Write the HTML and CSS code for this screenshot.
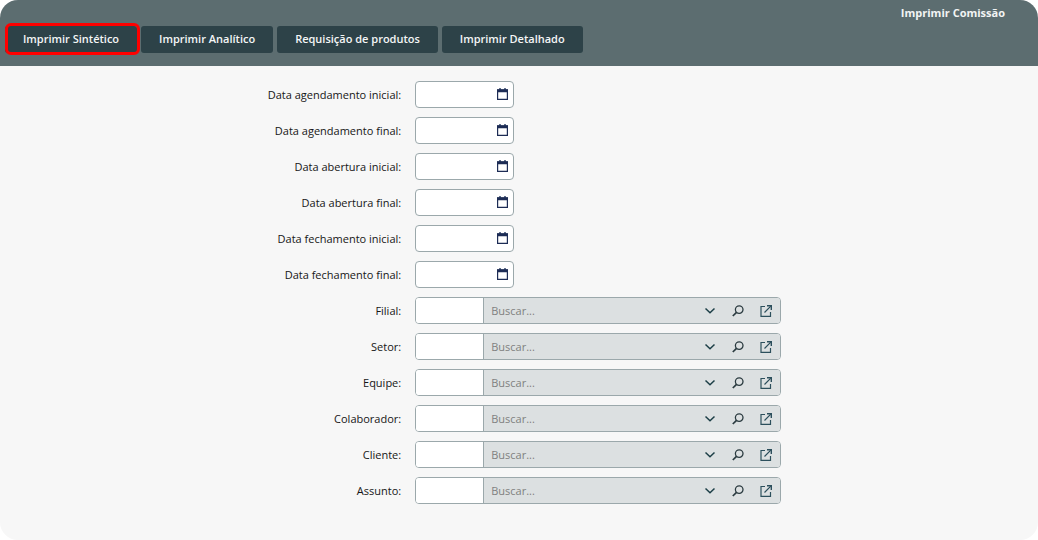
FILE: index.html
```html
<!DOCTYPE html>
<html lang="pt-BR">
<head>
<meta charset="utf-8">
<title>Imprimir Comissão</title>
<link rel="stylesheet" href="styles.css">
</head>
<body>
<svg class="sprite" aria-hidden="true">
  <symbol id="calendar" viewBox="0 0 11 12"><path d="M2 0h2v2h-2zM7 0h2v2h-2z" fill="#64728f"/><path d="M.6 2h9.800v9.400h-9.800z" fill="none" stroke="#1d2c55" stroke-width="1.200"/><path d="M0 1.300h11v2.900h-11z" fill="#1d2c55"/></symbol>
  <symbol id="chevron" viewBox="0 0 12 12"><path d="M1.500 3.500 6 7.700l4.500-4.200" fill="none" stroke="#1d3f47" stroke-width="1.500"/></symbol>
  <symbol id="search" viewBox="0 0 12 12"><circle cx="7.200" cy="4.600" r="3.800" fill="none" stroke="#2b3b40" stroke-width="1.300"/><path d="M4.500 7.300 .8 11" fill="none" stroke="#2b3b40" stroke-width="1.700"/></symbol>
  <symbol id="open" viewBox="0 0 12 12"><path d="M5 1.500H1v9.900h9.500V7M10.800 1.200 4.500 7.500" fill="none" stroke="#2c4f5c" stroke-width="1.200"/><path d="M7 .8h4.300V5" fill="none" stroke="#2c4f5c" stroke-width="1.400"/></symbol>
</svg>
<main class="window">
  <header class="header">
    <h1 class="title">Imprimir Comissão</h1>
    <nav class="actions">
      <button type="button" class="action action-selected">Imprimir Sintético</button>
      <button type="button" class="action">Imprimir Analítico</button>
      <button type="button" class="action">Requisição de produtos</button>
      <button type="button" class="action">Imprimir Detalhado</button>
    </nav>
  </header>
  <form class="form">
    <label class="label" for="ai">Data agendamento inicial:</label>
    <div class="date"><input class="field" id="ai" type="text"><button type="button" class="icon" aria-label="Calendário"><svg class="cal"><use href="#calendar"/></svg></button></div>
    <label class="label" for="af">Data agendamento final:</label>
    <div class="date"><input class="field" id="af" type="text"><button type="button" class="icon" aria-label="Calendário"><svg class="cal"><use href="#calendar"/></svg></button></div>
    <label class="label" for="bi">Data abertura inicial:</label>
    <div class="date"><input class="field" id="bi" type="text"><button type="button" class="icon" aria-label="Calendário"><svg class="cal"><use href="#calendar"/></svg></button></div>
    <label class="label" for="bf">Data abertura final:</label>
    <div class="date"><input class="field" id="bf" type="text"><button type="button" class="icon" aria-label="Calendário"><svg class="cal"><use href="#calendar"/></svg></button></div>
    <label class="label" for="fi">Data fechamento inicial:</label>
    <div class="date"><input class="field" id="fi" type="text"><button type="button" class="icon" aria-label="Calendário"><svg class="cal"><use href="#calendar"/></svg></button></div>
    <label class="label" for="ff">Data fechamento final:</label>
    <div class="date"><input class="field" id="ff" type="text"><button type="button" class="icon" aria-label="Calendário"><svg class="cal"><use href="#calendar"/></svg></button></div>
    <label class="label" for="filial">Filial:</label>
    <div class="lookup"><input class="code" id="filial" type="text"><div class="finder"><input class="field" type="text" placeholder="Buscar..." aria-label="Buscar filial"><button type="button" class="icon" aria-label="Listar"><svg class="glyph"><use href="#chevron"/></svg></button><button type="button" class="icon" aria-label="Pesquisar"><svg class="glyph"><use href="#search"/></svg></button><button type="button" class="icon" aria-label="Abrir"><svg class="glyph"><use href="#open"/></svg></button></div></div>
    <label class="label" for="setor">Setor:</label>
    <div class="lookup"><input class="code" id="setor" type="text"><div class="finder"><input class="field" type="text" placeholder="Buscar..." aria-label="Buscar setor"><button type="button" class="icon" aria-label="Listar"><svg class="glyph"><use href="#chevron"/></svg></button><button type="button" class="icon" aria-label="Pesquisar"><svg class="glyph"><use href="#search"/></svg></button><button type="button" class="icon" aria-label="Abrir"><svg class="glyph"><use href="#open"/></svg></button></div></div>
    <label class="label" for="equipe">Equipe:</label>
    <div class="lookup"><input class="code" id="equipe" type="text"><div class="finder"><input class="field" type="text" placeholder="Buscar..." aria-label="Buscar equipe"><button type="button" class="icon" aria-label="Listar"><svg class="glyph"><use href="#chevron"/></svg></button><button type="button" class="icon" aria-label="Pesquisar"><svg class="glyph"><use href="#search"/></svg></button><button type="button" class="icon" aria-label="Abrir"><svg class="glyph"><use href="#open"/></svg></button></div></div>
    <label class="label" for="colaborador">Colaborador:</label>
    <div class="lookup"><input class="code" id="colaborador" type="text"><div class="finder"><input class="field" type="text" placeholder="Buscar..." aria-label="Buscar colaborador"><button type="button" class="icon" aria-label="Listar"><svg class="glyph"><use href="#chevron"/></svg></button><button type="button" class="icon" aria-label="Pesquisar"><svg class="glyph"><use href="#search"/></svg></button><button type="button" class="icon" aria-label="Abrir"><svg class="glyph"><use href="#open"/></svg></button></div></div>
    <label class="label" for="cliente">Cliente:</label>
    <div class="lookup"><input class="code" id="cliente" type="text"><div class="finder"><input class="field" type="text" placeholder="Buscar..." aria-label="Buscar cliente"><button type="button" class="icon" aria-label="Listar"><svg class="glyph"><use href="#chevron"/></svg></button><button type="button" class="icon" aria-label="Pesquisar"><svg class="glyph"><use href="#search"/></svg></button><button type="button" class="icon" aria-label="Abrir"><svg class="glyph"><use href="#open"/></svg></button></div></div>
    <label class="label" for="assunto">Assunto:</label>
    <div class="lookup"><input class="code" id="assunto" type="text"><div class="finder"><input class="field" type="text" placeholder="Buscar..." aria-label="Buscar assunto"><button type="button" class="icon" aria-label="Listar"><svg class="glyph"><use href="#chevron"/></svg></button><button type="button" class="icon" aria-label="Pesquisar"><svg class="glyph"><use href="#search"/></svg></button><button type="button" class="icon" aria-label="Abrir"><svg class="glyph"><use href="#open"/></svg></button></div></div>
  </form>
</main>
</body>
</html>
```

FILE: styles.css
```css
* { box-sizing: border-box; }
body {
  margin: 0;
  background: #fff;
  color: #161616;
  font: 11px/16px "Open Sans", "Noto Sans", sans-serif;
}
button, input { font: inherit; margin: 0; }
.sprite { display: none; }
.window {
  min-height: 100vh;
  overflow: hidden;
  border-radius: 18px;
  background: #f7f7f7;
}
.header {
  padding: 5px 5px 13px;
  background: #5c6d70;
}
.title {
  margin: 0 28px 5px 0;
  color: #f2f4f4;
  font-size: 11px;
  font-weight: 700;
  line-height: 16px;
  text-align: right;
}
.actions { display: flex; flex-wrap: wrap; gap: 4px; }
.action {
  position: relative;
  height: 27px;
  padding: 0 18px 2px;
  border: 0;
  border-radius: 3px;
  background: #2d4248;
  color: #f4f6f6;
  font-weight: 600;
}
.action-selected::after {
  content: "";
  position: absolute;
  inset: -3px -3px -2px 0;
  border: 3px solid #f00;
  border-radius: 6px;
}
.form {
  display: grid;
  grid-template-columns: 40% 1fr;
  row-gap: 9px;
  align-items: center;
  padding: 15px 0 36px;
}
.label { padding-right: 14px; text-align: right; }
.date, .lookup {
  display: flex;
  height: 27px;
  overflow: hidden;
  border: 1px solid #9ba8ab;
  border-radius: 4px;
  background: #fff;
}
.date { width: 99px; padding-right: 5px; }
.lookup { width: 366px; max-width: 100%; }
.code {
  width: 68px;
  padding: 0 7px;
  border: 0;
  border-right: 1px solid #9ba8ab;
  background: #fff;
}
.finder {
  display: flex;
  flex: 1;
  gap: 16px;
  min-width: 0;
  padding-right: 8px;
  background: #dce0e1;
}
.field {
  flex: 1;
  min-width: 0;
  padding: 0 7px;
  border: 0;
  background: transparent;
}
.field::placeholder { color: #808080; opacity: 1; }
.icon {
  display: flex;
  align-items: center;
  padding: 0;
  border: 0;
  background: none;
}
.date .icon { padding-bottom: 1px; }
.cal { width: 11px; height: 12px; }
.glyph { width: 12px; height: 12px; }
```
